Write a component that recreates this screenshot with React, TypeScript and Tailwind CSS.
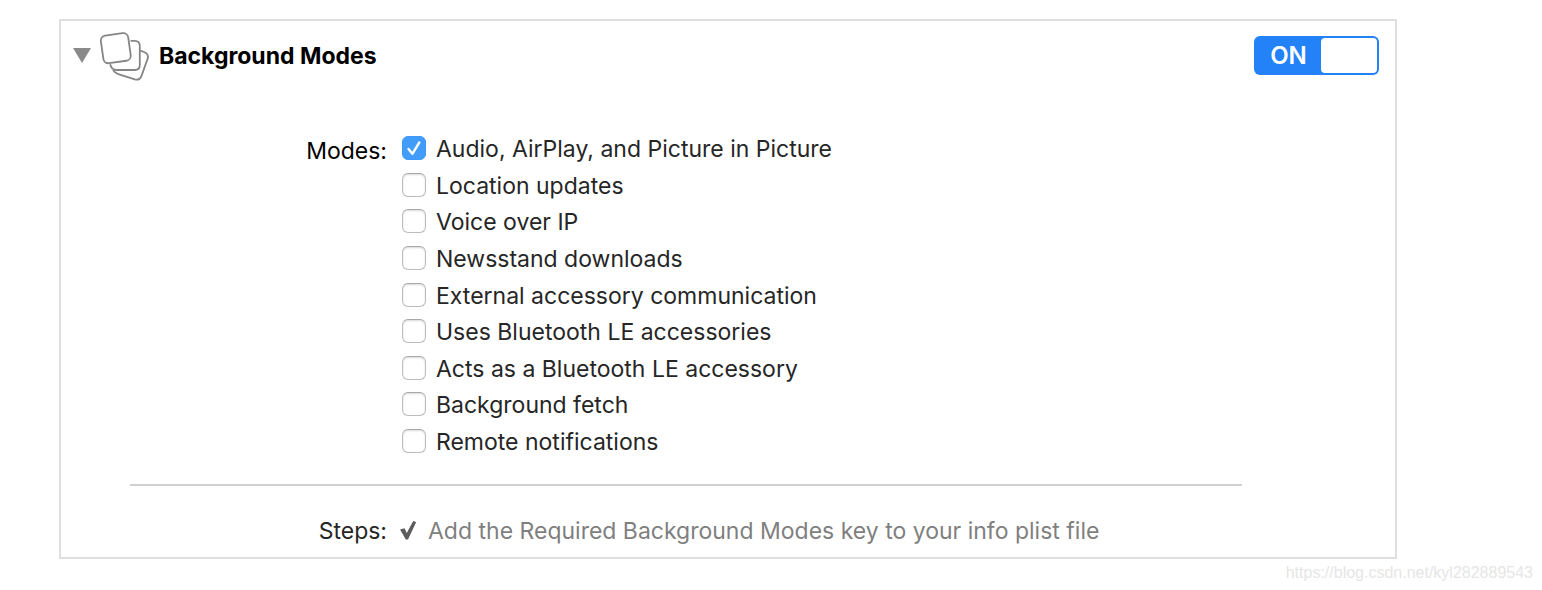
import React, { useState } from 'react';

const MODES = [
  'Audio, AirPlay, and Picture in Picture',
  'Location updates',
  'Voice over IP',
  'Newsstand downloads',
  'External accessory communication',
  'Uses Bluetooth LE accessories',
  'Acts as a Bluetooth LE accessory',
  'Background fetch',
  'Remote notifications',
];

function StackIcon() {
  return (
    <svg className="h-[52px] w-[52px] shrink-0 overflow-visible" viewBox="0 -1 52 52" fill="none" stroke="#858585" strokeWidth="1.8">
      <path d="M42.4 20.6 L46 22 Q51.2 24 49.6 28.8 L43.6 45.6 Q41.8 50.8 36.8 49.4 L20.3 44.2 Q17 43 15 40" />
      <path d="M32.6 10.8 H36.6 Q41.8 10.8 41.8 16 V35 Q41.8 40 36.8 40 H18.4 Q13.4 39.8 12.2 34.2" />
      <rect x="4" y="4.3" width="27.6" height="27.8" rx="5" transform="rotate(-8 17.8 18.2)" fill="#fff" />
    </svg>
  );
}

interface ModeRowProps {
  name: string;
  checked: boolean;
  onToggle: () => void;
}

function ModeRow({ name, checked, onToggle }: ModeRowProps) {
  return (
    <label className="flex h-6 items-center gap-[10px] whitespace-nowrap text-[#262626]">
      <span className="relative h-6 w-6 shrink-0">
        <input
          type="checkbox"
          checked={checked}
          onChange={onToggle}
          className="block h-6 w-6 appearance-none rounded-[6px] border border-[#bdbdbd] border-t-[#a8a8a8] bg-white shadow-[inset_0_1px_2px_#d8d8d8] checked:border-[#3b99fc] checked:bg-[#429cfa] checked:shadow-none"
        />
        {checked && (
          <svg className="pointer-events-none absolute inset-0" viewBox="0 0 24 24" fill="none" stroke="#fff" strokeWidth="2.4" strokeLinecap="round" strokeLinejoin="round">
            <path d="M6.5 13 L10.4 17.8 L17.3 6.5" />
          </svg>
        )}
      </span>
      <span className="pt-[2px]">{name}</span>
    </label>
  );
}

export default function App() {
  const [open, setOpen] = useState(true);
  const [enabled, setEnabled] = useState(true);
  const [selected, setSelected] = useState<string[]>([MODES[0]]);

  const toggleMode = (mode: string) => {
    setSelected(selected.includes(mode) ? selected.filter(m => m !== mode) : [...selected, mode]);
  };

  return (
    <div className="bg-white font-['Inter',sans-serif] text-[23px] leading-6">
      <section className="mr-[145px] ml-[59px] pt-[19px]">
        <div className="border-2 border-[#dfdfdf] pb-[14px]">
          <header className="flex items-center pt-2 pr-4 pl-3">
            <button type="button" aria-label="Toggle section" aria-expanded={open} onClick={() => setOpen(!open)}>
              <svg className={open ? 'h-4 w-[18px]' : 'h-4 w-[18px] -rotate-90'} viewBox="0 0 18 16">
                <path d="M0 1 H18 L9 16 Z" fill="#8a8a8a" />
              </svg>
            </button>
            <span className="ml-[7px]">
              <StackIcon />
            </span>
            <h2 className="ml-[9px] pt-[2px] font-bold text-black">Background Modes</h2>
            <button
              type="button"
              role="switch"
              aria-checked={enabled}
              onClick={() => setEnabled(!enabled)}
              className="ml-auto flex h-[39px] w-[125px] items-center rounded-[6px] bg-[#2382f7] p-[2px] text-2xl font-semibold text-white"
            >
              <span className="flex-1 pt-[2px] text-center">{enabled ? 'ON' : 'OFF'}</span>
              <span className="h-full w-[56px] rounded-[4px] bg-white" />
            </button>
          </header>

          {open && (
            <>
              <div className="mt-[55px] grid grid-cols-[326px_1fr] gap-[15px]">
                <div id="modes-label" className="pt-[3px] text-right text-black">Modes:</div>
                <div role="group" aria-labelledby="modes-label" className="flex h-[317px] flex-col items-start justify-between">
                  {MODES.map(mode => (
                    <ModeRow
                      key={mode}
                      name={mode}
                      checked={selected.includes(mode)}
                      onToggle={() => toggleMode(mode)}
                    />
                  ))}
                </div>
              </div>

              <hr className="mt-[31px] mr-[153px] ml-[69px] border-t-2 border-[#d0d0d0]" />

              <div className="mt-[33px] grid grid-cols-[326px_1fr] gap-[13px]">
                <div className="text-right text-[#262626]">Steps:</div>
                <div className="flex items-center gap-3 text-[#7f7f7f]">
                  <svg className="h-5 w-4 shrink-0" viewBox="0 0 16 20">
                    <path d="M0 8.5 L4.6 7.3 L6.8 12 L13.2 0 L16.2 1.2 L8 18.5 L5.8 18.5 Z" fill="#5c5c5c" />
                  </svg>
                  <span>Add the Required Background Modes key to your info plist file</span>
                </div>
              </div>
            </>
          )}
        </div>
      </section>
      <footer className="pt-[2px] pr-[9px] text-right font-['Liberation_Sans',sans-serif] text-base leading-6 text-[#e6e6e6]">
        https://blog.csdn.net/kyl282889543
      </footer>
    </div>
  );
}
